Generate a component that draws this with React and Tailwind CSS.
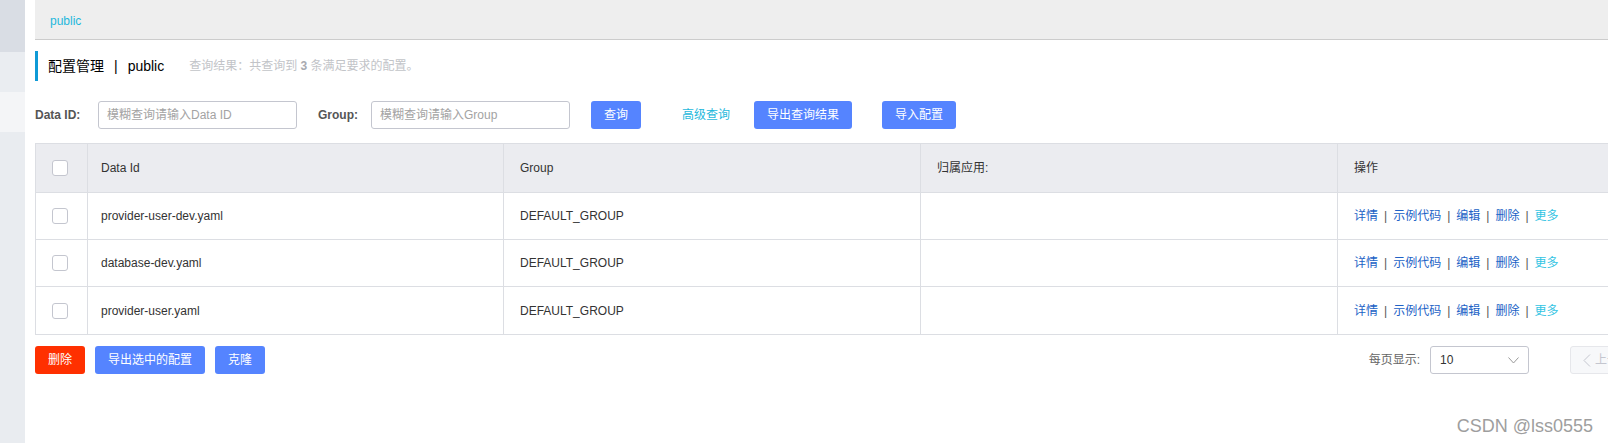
import React from 'react'

const rows = [
  { id: 'provider-user-dev.yaml', group: 'DEFAULT_GROUP' },
  { id: 'database-dev.yaml', group: 'DEFAULT_GROUP' },
  { id: 'provider-user.yaml', group: 'DEFAULT_GROUP' },
]

function Checkbox() {
  return <span className="block w-[16px] h-[16px] rounded-[3px] border border-[#c4c6cf] bg-white" />
}

function Actions() {
  const sep = <span className="px-[6px] text-[#555]">|</span>
  return (
    <div className="flex items-center text-[12px] text-[#2162c6]">
      <span>详情</span>{sep}
      <span>示例代码</span>{sep}
      <span>编辑</span>{sep}
      <span>删除</span>{sep}
      <span className="text-[#33c4e3]">更多</span>
    </div>
  )
}

export default function App() {
  const font = { fontFamily: '"Liberation Sans", "Noto Sans CJK SC", sans-serif' }
  const cell = 'flex items-center border-l border-[#dcdee3] shrink-0'

  return (
    <div className="relative w-[1608px] h-[443px] overflow-hidden flex bg-white text-[#333]" style={font}>
      {/* sidebar */}
      <div className="w-[25px] shrink-0 flex flex-col">
        <div className="h-[52px] bg-[#d9dde4]" />
        <div className="h-[40px] bg-[#eaedf1]" />
        <div className="h-[40px] bg-[#f4f5f7]" />
        <div className="flex-1 bg-[#e9ecf0]" />
      </div>

      <div className="flex-1 min-w-0 pl-[10px]">
        {/* breadcrumb bar */}
        <div className="h-[40px] bg-[#eeeeee] border-b border-[#cccccc] flex items-center pl-[15px] pt-[2px]">
          <span className="text-[12px] text-[#1fb8dc]">public</span>
        </div>

        {/* title */}
        <div className="mt-[11px] h-[30px] border-l-[3px] border-[#0f9ad6] pl-[10px] flex items-center whitespace-nowrap">
          <span className="text-[14px] text-black">配置管理</span>
          <span className="text-[14px] text-black mx-[10px]">|</span>
          <span className="text-[14px] text-black">public</span>
          <span className="ml-[25px] text-[12px] text-[#c2c4c8]">
            查询结果：共查询到 <b className="text-[#a8aab0]">3</b> 条满足要求的配置。
          </span>
        </div>

        {/* search row */}
        <div className="mt-[20px] h-[28px] flex items-center whitespace-nowrap">
          <span className="w-[63px] shrink-0 text-[12px] font-bold text-[#555]">Data ID:</span>
          <div className="w-[199px] h-[28px] shrink-0 border border-[#c4c6cf] rounded-[3px] flex items-center pl-[8px] text-[12px] text-[#a3a3a3]">
            模糊查询请输入Data ID
          </div>
          <span className="ml-[21px] w-[53px] shrink-0 text-[12px] font-bold text-[#555]">Group:</span>
          <div className="w-[199px] h-[28px] shrink-0 border border-[#c4c6cf] rounded-[3px] flex items-center pl-[8px] text-[12px] text-[#a3a3a3]">
            模糊查询请输入Group
          </div>
          <button className="ml-[21px] w-[50px] h-[28px] shrink-0 rounded-[3px] bg-[#5584ff] text-white text-[12px]">查询</button>
          <span className="ml-[41px] text-[12px] text-[#1fb8dc]">高级查询</span>
          <button className="ml-[24px] w-[98px] h-[28px] shrink-0 rounded-[3px] bg-[#5584ff] text-white text-[12px]">导出查询结果</button>
          <button className="ml-[30px] w-[74px] h-[28px] shrink-0 rounded-[3px] bg-[#5584ff] text-white text-[12px]">导入配置</button>
        </div>

        {/* table */}
        <div className="mt-[14px] w-[1719px] border border-[#dcdee3] text-[12px] text-[#333]">
          <div className="flex h-[49px] bg-[#ebecf0] border-b border-[#dcdee3]">
            <div className="w-[51px] shrink-0 flex items-center justify-center pr-[3px]"><Checkbox /></div>
            <div className={`${cell} w-[416px] pl-[13px]`}>Data Id</div>
            <div className={`${cell} w-[417px] pl-[16px]`}>Group</div>
            <div className={`${cell} w-[417px] pl-[16px]`}>归属应用:</div>
            <div className={`${cell} w-[417px] pl-[16px]`}>操作</div>
          </div>
          {rows.map((r, i) => (
            <div key={r.id} className={`flex h-[47px] ${i < rows.length - 1 ? 'border-b border-[#dcdee3]' : ''}`}>
              <div className="w-[51px] shrink-0 flex items-center justify-center pr-[3px]"><Checkbox /></div>
              <div className={`${cell} w-[416px] pl-[13px]`}>{r.id}</div>
              <div className={`${cell} w-[417px] pl-[16px]`}>{r.group}</div>
              <div className={`${cell} w-[417px] pl-[16px]`}></div>
              <div className={`${cell} w-[417px] pl-[16px]`}><Actions /></div>
            </div>
          ))}
        </div>

        {/* bottom bar */}
        <div className="mt-[11px] w-[1719px] h-[28px] flex items-center whitespace-nowrap">
          <button className="w-[50px] h-[28px] rounded-[3px] bg-[#ff3000] text-white text-[12px]">删除</button>
          <button className="ml-[10px] w-[110px] h-[28px] rounded-[3px] bg-[#5584ff] text-white text-[12px]">导出选中的配置</button>
          <button className="ml-[10px] w-[50px] h-[28px] rounded-[3px] bg-[#5584ff] text-white text-[12px]">克隆</button>

          <div className="ml-auto flex items-center">
            <span className="text-[12px] text-[#666]">每页显示:</span>
            <div className="ml-[10px] w-[99px] h-[28px] border border-[#c4c6cf] rounded-[3px] flex items-center justify-between pl-[9px] pr-[9px] text-[12px] text-[#333]">
              <span>10</span>
              <svg width="11" height="7" viewBox="0 0 11 7" fill="none">
                <polyline points="0.5,0.5 5.5,6 10.5,0.5" stroke="#999" strokeWidth="1" />
              </svg>
            </div>
            <div className="ml-[41px] w-[74px] h-[28px] border border-[#e6e7eb] bg-[#f7f8fa] rounded-[3px] flex items-center pl-[12px] text-[12px] text-[#c4c6cf]">
              <svg width="8" height="13" viewBox="0 0 8 13" fill="none" className="mr-[4px]">
                <polyline points="7,0.5 1,6.5 7,12.5" stroke="#c4c6cf" strokeWidth="1" />
              </svg>
              <span>上一页</span>
            </div>
            <div className="ml-[4px] w-[28px] h-[28px] rounded-[3px] bg-[#5584ff] text-white text-[12px] flex items-center justify-center">1</div>
            <div className="ml-[4px] w-[74px] h-[28px] border border-[#e6e7eb] bg-[#f7f8fa] rounded-[3px] flex items-center justify-center text-[12px] text-[#c4c6cf]">下一页</div>
          </div>
        </div>
      </div>

      {/* watermark */}
      <span className="absolute right-[15px] bottom-[8px] text-[18px] leading-none text-[#9e9e9e]">CSDN @lss0555</span>
    </div>
  )
}
